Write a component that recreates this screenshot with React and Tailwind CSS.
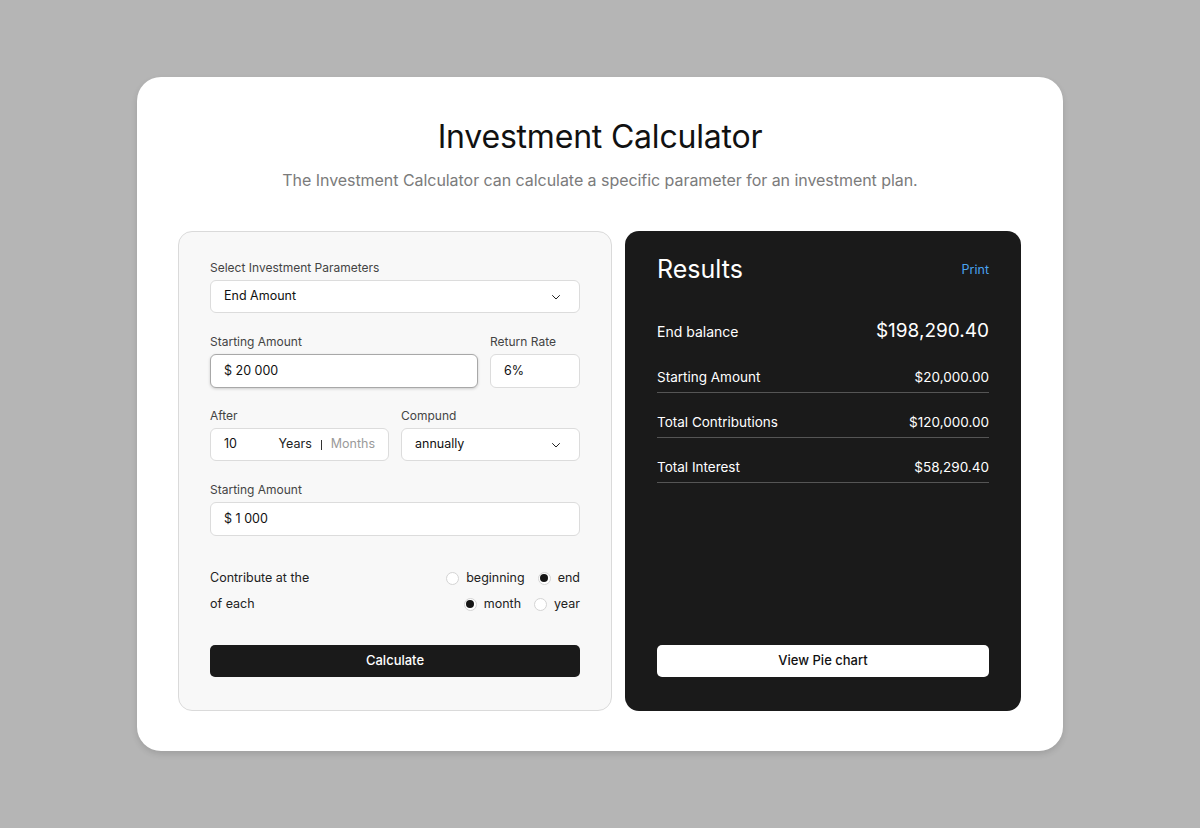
import React from "react";

const Chevron = () => (
  <svg width="12" height="12" viewBox="0 0 24 24" fill="none" stroke="#222" strokeWidth="2" strokeLinecap="round" strokeLinejoin="round">
    <path d="M5 9l7 7 7-7" />
  </svg>
);

const Radio = ({ checked, label }) => (
  <div className="flex items-center gap-[7px]">
    <span className="w-[13px] h-[13px] rounded-full border border-[#d4d4d4] bg-white flex items-center justify-center">
      {checked && <span className="w-[8px] h-[8px] rounded-full bg-[#151515]" />}
    </span>
    <span className="text-[12.5px] text-[#222]">{label}</span>
  </div>
);

const Label = ({ children }) => (
  <div className="text-[12px] leading-[16px] text-[#444] mb-[4px]">{children}</div>
);

export default function App() {
  return (
    <div className="min-h-screen bg-[#b5b5b5] pt-[77px] pb-[77px] flex justify-center" style={{ fontFamily: "Inter, 'Noto Sans', sans-serif" }}>
      <div className="w-[926px] h-[674px] bg-white rounded-[24px] shadow-[0_3px_6px_rgba(0,0,0,0.12)] pt-[40px] px-[41px] flex flex-col items-center">
        <h1 className="text-[32px] leading-[40px] text-[#111] font-normal tracking-[-0.2px]">Investment Calculator</h1>
        <p className="mt-[11px] text-[16px] leading-[24px] text-[#7b7b7b] tracking-[-0.05px]">The Investment Calculator can calculate a specific parameter for an investment plan.</p>
        <div className="mt-[39px] flex gap-[13px] w-full">
          {/* Left panel */}
          <div className="w-[434px] h-[480px] bg-[#f8f8f8] border border-[#dadada] rounded-[14px] px-[31px] pt-[28px] flex flex-col">
            <Label>Select Investment Parameters</Label>
            <div className="h-[33px] bg-white border border-[#dcdcdc] rounded-[6px] px-[13px] flex items-center justify-between">
              <span className="text-[12.5px] text-[#111]">End Amount</span>
              <span className="mr-[4px] flex"><Chevron /></span>
            </div>

            <div className="mt-[21px] flex gap-[12px]">
              <div className="w-[268px]">
                <Label>Starting Amount</Label>
                <div className="h-[34px] bg-white border border-[#a8a8a8] rounded-[6px] px-[13px] flex items-center shadow-[0_1px_3px_rgba(0,0,0,0.18)]">
                  <span className="text-[12.5px] text-[#111]">$ 20 000</span>
                </div>
              </div>
              <div className="flex-1">
                <Label>Return Rate</Label>
                <div className="h-[34px] bg-white border border-[#dcdcdc] rounded-[6px] px-[13px] flex items-center">
                  <span className="text-[12.5px] text-[#111]">6%</span>
                </div>
              </div>
            </div>

            <div className="mt-[20px] flex gap-[12px]">
              <div className="w-[179px]">
                <Label>After</Label>
                <div className="h-[33px] bg-white border border-[#dcdcdc] rounded-[6px] pl-[13px] pr-[13px] flex items-center">
                  <span className="text-[12.5px] text-[#111]">10</span>
                  <span className="ml-auto text-[12.5px] text-[#222]">Years</span>
                  <span className="mx-[9px] w-px h-[10px] bg-[#333]" />
                  <span className="text-[12.5px] text-[#9a9a9a]">Months</span>
                </div>
              </div>
              <div className="flex-1">
                <Label>Compund</Label>
                <div className="h-[33px] bg-white border border-[#dcdcdc] rounded-[6px] px-[13px] flex items-center justify-between">
                  <span className="text-[12.5px] text-[#111]">annually</span>
                  <span className="mr-[4px] flex"><Chevron /></span>
                </div>
              </div>
            </div>

            <div className="mt-[21px]">
              <Label>Starting Amount</Label>
              <div className="h-[34px] bg-white border border-[#dcdcdc] rounded-[6px] px-[13px] flex items-center">
                <span className="text-[12.5px] text-[#111]">$ 1 000</span>
              </div>
            </div>

            <div className="mt-[32px] flex flex-col gap-[6px]">
              <div className="h-[20px] flex items-center justify-between">
                <span className="text-[12.5px] text-[#222]">Contribute at the</span>
                <div className="flex items-center gap-[13px]">
                  <Radio label="beginning" />
                  <Radio checked label="end" />
                </div>
              </div>
              <div className="h-[20px] flex items-center justify-between">
                <span className="text-[12.5px] text-[#222]">of each</span>
                <div className="flex items-center gap-[13px]">
                  <Radio checked label="month" />
                  <Radio label="year" />
                </div>
              </div>
            </div>

            <button className="mt-[31px] h-[32px] w-full bg-[#1a1a1a] rounded-[5px] text-white text-[13px] font-medium">Calculate</button>
          </div>

          {/* Right panel */}
          <div className="w-[396px] h-[480px] bg-[#1a1a1a] rounded-[14px] px-[32px] pt-[23px] pb-[34px] flex flex-col">
            <div className="h-[32px] flex items-center justify-between">
              <span className="text-[25px] text-white">Results</span>
              <span className="text-[12.5px] text-[#4aa3f0]">Print</span>
            </div>
            <div className="mt-[31px] h-[28px] flex items-center justify-between">
              <span className="text-[14px] text-white">End balance</span>
              <span className="text-[19px] text-white">$198,290.40</span>
            </div>
            <div className="h-[48px] border-b border-[#555] flex items-end justify-between pb-[5px]">
              <span className="text-[13.5px] leading-[20px] text-white">Starting Amount</span>
              <span className="text-[13.5px] leading-[20px] text-white">$20,000.00</span>
            </div>
            <div className="h-[45px] border-b border-[#555] flex items-end justify-between pb-[5px]">
              <span className="text-[13.5px] leading-[20px] text-white">Total Contributions</span>
              <span className="text-[13.5px] leading-[20px] text-white">$120,000.00</span>
            </div>
            <div className="h-[45px] border-b border-[#555] flex items-end justify-between pb-[5px]">
              <span className="text-[13.5px] leading-[20px] text-white">Total Interest</span>
              <span className="text-[13.5px] leading-[20px] text-white">$58,290.40</span>
            </div>
            <button className="mt-auto h-[32px] w-full bg-white rounded-[5px] text-[#111] text-[13px] font-medium">View Pie chart</button>
          </div>
        </div>
      </div>
    </div>
  );
}
